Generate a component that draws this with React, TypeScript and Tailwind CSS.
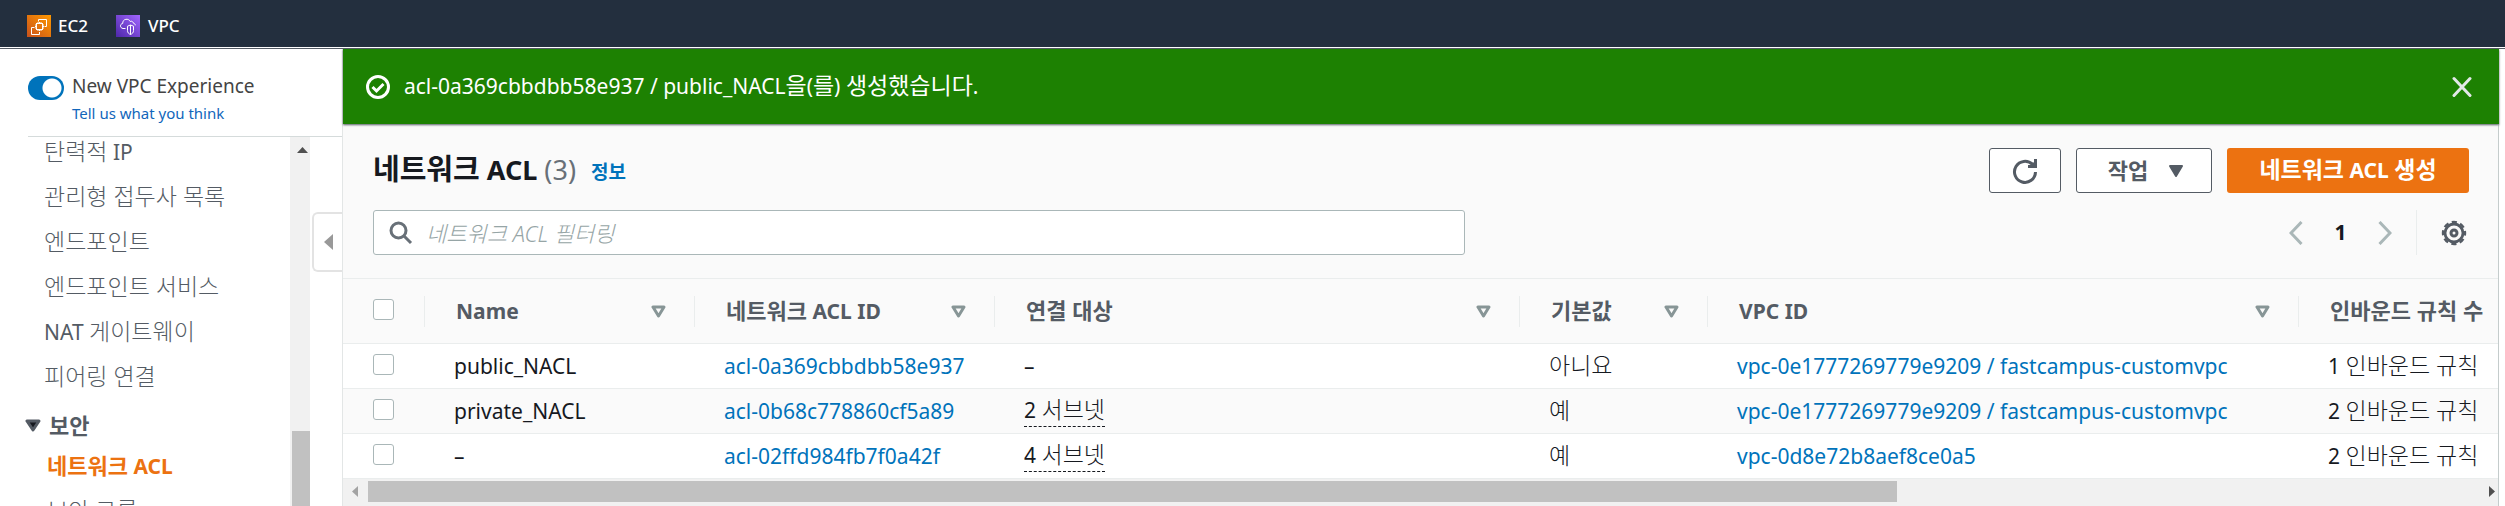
import { useState } from "react";

type Row = { name: string; acl: string; count: string; linked: boolean; isDefault: string; vpc: string; inbound: string };

const rows: Row[] = [
  { name: "public_NACL", acl: "acl-0a369cbbdbb58e937", count: "–", linked: false, isDefault: "아니요", vpc: "vpc-0e1777269779e9209 / fastcampus-customvpc", inbound: "1 인바운드 규칙" },
  { name: "private_NACL", acl: "acl-0b68c778860cf5a89", count: "2 서브넷", linked: true, isDefault: "예", vpc: "vpc-0e1777269779e9209 / fastcampus-customvpc", inbound: "2 인바운드 규칙" },
  { name: "–", acl: "acl-02ffd984fb7f0a42f", count: "4 서브넷", linked: true, isDefault: "예", vpc: "vpc-0d8e72b8aef8ce0a5", inbound: "2 인바운드 규칙" },
];

const columns = ["Name", "네트워크 ACL ID", "연결 대상", "기본값", "VPC ID", "인바운드 규칙 수"];

const navItems = ["탄력적 IP", "관리형 접두사 목록", "엔드포인트", "엔드포인트 서비스", "NAT 게이트웨이", "피어링 연결"];

// Hangul is set a little larger than the Latin text beside it.
function Mixed({ text, hangul = "text-[23px] font-light" }: { text: string; hangul?: string }) {
  return (
    <span>
      {text.split(/([가-힣]+(?: [가-힣]+)*)/).map((part, i) =>
        i % 2 ? <span key={i} className={`leading-none ${hangul}`}>{part}</span> : part,
      )}
    </span>
  );
}

function Ec2Icon() {
  return (
    <svg width="24" height="22" viewBox="0 0 24 22" fill="none" stroke="#fff" strokeWidth="1" aria-hidden="true">
      <defs>
        <linearGradient id="ec2" x1="0" y1="1" x2="1" y2="0">
          <stop offset="0" stopColor="#c8511b" />
          <stop offset="1" stopColor="#ff9900" />
        </linearGradient>
      </defs>
      <rect width="24" height="22" fill="url(#ec2)" stroke="none" />
      <rect x="9.5" y="8.5" width="6" height="6" />
      <path d="M11 8.5V7M12.5 8.5V7M14 8.5V7M11 14.5V16M12.5 14.5V16M14 14.5V16M9.500 10H8M9.500 11.500H8M9.500 13H8M15.500 10H17M15.500 11.500H17M15.500 13H17" />
      <path d="M11.500 6.500v-2h8v7h-2M7.500 12.500h-3v7h8v-2.500" />
    </svg>
  );
}

function VpcIcon() {
  return (
    <svg width="24" height="22" viewBox="0 0 24 22" fill="none" stroke="#fff" strokeWidth="1" aria-hidden="true">
      <defs>
        <linearGradient id="vpc" x1="0" y1="1" x2="1" y2="0">
          <stop offset="0" stopColor="#4d27a8" />
          <stop offset="1" stopColor="#a166ff" />
        </linearGradient>
      </defs>
      <rect width="24" height="22" fill="url(#vpc)" stroke="none" />
      <path d="M9.500 13.500H7c-3.300-.5-3.300-4.600-.3-5C6.500 3.500 12.800 3 14.300 6.500c1.500-.8 2.800.2 3 1.600 1.200.2 1.900 1 2 2.200" />
      <path d="M14.500 10 11.500 11.200v4.300c0 2 1 3.200 3 4 2-.8 3-2 3-4v-4.300zM14.500 10v9.500" />
    </svg>
  );
}

function FilterTriangle() {
  return (
    <svg width="15" height="13" viewBox="0 0 15 13" fill="none" stroke="#879596" strokeWidth="3" strokeLinejoin="round" aria-hidden="true">
      <path d="M2 2h11L7.500 11z" />
    </svg>
  );
}

function Check({ label }: { label: string }) {
  return (
    <input
      type="checkbox"
      aria-label={label}
      className="mb-[3px] block size-[21px] appearance-none rounded-[3px] border border-[#aab7b8] bg-white checked:bg-[#0073bb]"
    />
  );
}

function Sidebar() {
  const [on, setOn] = useState(true);
  return (
    <aside className="relative flex w-[343px] shrink-0 flex-col overflow-hidden border-r border-[#e3e6e6] bg-white">
      <div className="ml-7 flex h-[88px] shrink-0 gap-2 border-b border-[#d5dbdb] pt-6">
        <input
          id="experience"
          type="checkbox"
          checked={on}
          onChange={() => setOn(!on)}
          className="mt-[3px] h-6 w-9 shrink-0 appearance-none rounded-full bg-[#879596] bg-[radial-gradient(circle_at_12px_12px,#fff_9px,transparent_10px)] checked:bg-[#0073bb] checked:bg-[radial-gradient(circle_at_24px_12px,#fff_9px,transparent_10px)]"
        />
        <div className="flex flex-col">
          <label htmlFor="experience" className="text-[19px] leading-[26px] text-[#444]">New VPC Experience</label>
          <a href="#feedback" className="text-[15px] leading-[28px] text-[#1166bb]">Tell us what you think</a>
        </div>
      </div>
      <div className="flex min-h-0 flex-1">
        <nav className="h-0 min-h-full flex-1 overflow-hidden text-[#545b64]">
          <ul className="-mt-[7px] pl-11">
            {navItems.map((item) => (
              <li key={item} className="h-[45px] leading-[45px]">
                <a href="#nav"><Mixed text={item} /></a>
              </li>
            ))}
          </ul>
          <h2 className="mt-[3px] flex h-[41px] items-center gap-2 pt-1 pl-[25px] text-[22px] font-bold">
            <svg width="16" height="13" viewBox="0 0 16 13" aria-hidden="true">
              <path d="M2 2h12L8 11z" fill="#16191f" stroke="#545b64" strokeWidth="3" strokeLinejoin="round" />
            </svg>
            보안
          </h2>
          <ul className="pl-[47px] leading-[45px]">
            <li className="h-[45px]"><a href="#acl" className="font-bold text-[#ec7211]"><Mixed text="네트워크 ACL" hangul="text-[22px]" /></a></li>
            <li className="h-[45px]"><a href="#sg"><Mixed text="보안 그룹" /></a></li>
          </ul>
        </nav>
        <div className="flex w-5 flex-col bg-[#f1f1f1]" aria-hidden="true">
          <svg className="mt-2.5 ml-[7px]" width="11" height="6" viewBox="0 0 11 6"><path d="M0 6 5.500 0 11 6z" fill="#505050" /></svg>
          <div className="mt-[278px] ml-0.5 flex-1 bg-[#c1c1c1]" />
        </div>
        <div className="w-8 pt-[75px]">
          <button type="button" aria-label="Collapse navigation" className="ml-0.5 flex h-[60px] w-[31px] items-center rounded-l-md border-2 border-r-0 border-[#e3e3e3] bg-white pl-2.5">
            <svg width="9" height="16" viewBox="0 0 9 16"><path d="M9 0v16L0 8z" fill="#999" /></svg>
          </button>
        </div>
      </div>
    </aside>
  );
}

export default function App() {
  return (
    <div className="flex h-screen flex-col overflow-hidden bg-white font-['Noto_Sans','Noto_Sans_CJK_KR',sans-serif] text-[21px] text-[#16191f]">
      <header className="flex h-[47px] shrink-0 items-center bg-[#232f3e] pt-1 pl-[27px] text-[17px] font-medium text-white">
        <a href="#ec2" className="flex items-center gap-[7px]"><Ec2Icon />EC2</a>
        <a href="#vpc" className="ml-7 flex items-center gap-2"><VpcIcon />VPC</a>
      </header>
      <div className="mt-px h-px shrink-0 bg-[#545b64]" />
      <div className="flex min-h-0 flex-1">
        <Sidebar />
        <main className="mr-1.5 flex min-w-0 flex-1 flex-col border-r border-[#c4cccc] bg-[#fafafa]">
          <div role="status" className="z-10 -mr-px flex h-[75px] shrink-0 items-center bg-[#1d8102] pr-[27px] pl-[22px] text-white shadow-[0_1px_2px_#545b64]">
            <svg width="26" height="26" viewBox="0 0 26 26" fill="none" stroke="#fff" strokeWidth="3" aria-hidden="true">
              <circle cx="13" cy="13" r="10.500" />
              <path d="m7.500 13 4 4 7-7" />
            </svg>
            <span className="ml-[13px]"><Mixed text="acl-0a369cbbdbb58e937 / public_NACL을(를) 생성했습니다." hangul="text-[23px]" /></span>
            <button type="button" aria-label="닫기" className="ml-auto">
              <svg width="20" height="22" viewBox="0 0 20 22" fill="none" stroke="#e3e8e8" strokeWidth="3" strokeLinecap="round"><path d="m2 2.500 16 17M18 2.500l-16 17" /></svg>
            </button>
          </div>
          <div className="flex items-center gap-[15px] pt-6 pr-[29px] pl-[30px]">
            <h1 className="h-[45px] text-[27px] leading-[44px] font-bold"><Mixed text="네트워크 ACL" hangul="text-[29px]" /> <span className="font-normal text-[#687078]">(3)</span></h1>
            <a href="#info" className="pt-1 text-[19px] font-bold text-[#0073bb]">정보</a>
            <button type="button" aria-label="새로 고침" className="ml-auto flex h-[45px] w-[72px] items-center justify-center rounded-[3px] border border-[#545b64] bg-white">
              <svg width="26" height="26" viewBox="0 0 26 26" fill="none" stroke="#545b64" strokeWidth="3"><path d="M23.500 14A10.500 10.500 0 1 1 20.500 6.500" /><path d="M23.500 1v7.500H16M20 5l3 3" /></svg>
            </button>
            <button type="button" className="flex h-[45px] w-[136px] items-center justify-center gap-5 rounded-[3px] border border-[#545b64] bg-white pl-1 text-[22px] font-bold text-[#545b64]">
              작업
              <svg width="16" height="14" viewBox="0 0 16 14"><path d="M2 2h12L8 12z" fill="#545b64" stroke="#545b64" strokeWidth="2" strokeLinejoin="round" /></svg>
            </button>
            <button type="button" className="h-[45px] w-[242px] rounded-[3px] bg-[#ec7211] font-bold whitespace-nowrap text-white"><Mixed text="네트워크 ACL 생성" hangul="text-[23px]" /></button>
          </div>
          <div className="flex items-center pt-[17px] pr-[29px] pb-[23px] pl-[30px]">
            <div className="flex h-[45px] w-[1092px] items-center rounded-[3px] border border-[#aab7b8] bg-white pl-[15px]">
              <svg width="24" height="24" viewBox="0 0 24 24" fill="none" stroke="#687078" strokeWidth="3" aria-hidden="true"><circle cx="9.500" cy="9.500" r="7.500" /><path d="m15 15 7 7" /></svg>
              <input type="search" aria-label="네트워크 ACL 필터링" placeholder="네트워크 ACL 필터링" className="ml-[13px] h-full flex-1 bg-transparent text-[22px] outline-none placeholder:font-light placeholder:text-[#96a5a6] placeholder:italic" />
            </div>
            <div className="ml-auto flex h-[45px] items-center">
              <button type="button" aria-label="이전 페이지"><svg width="14" height="24" viewBox="0 0 14 24" fill="none" stroke="#aab7b8" strokeWidth="3"><path d="M12.500 1 2 12l10.500 11" /></svg></button>
              <span className="w-[75px] text-center font-bold">1</span>
              <button type="button" aria-label="다음 페이지"><svg width="14" height="24" viewBox="0 0 14 24" fill="none" stroke="#aab7b8" strokeWidth="3"><path d="M1.500 1 12 12 1.500 23" /></svg></button>
              <span className="mx-6 h-full w-px bg-[#eaeded]" />
              <button type="button" aria-label="설정" className="mr-0.5">
                <svg width="26" height="26" viewBox="0 0 26 26" fill="none" stroke="#545b64">
                  <circle cx="13" cy="13" r="3" strokeWidth="3" />
                  <circle cx="13" cy="13" r="9" strokeWidth="2.800" />
                  <circle cx="13" cy="13" r="11" strokeWidth="2.400" strokeDasharray="5.200 3.440" strokeDashoffset="2.600" />
                </svg>
              </button>
            </div>
          </div>
          <table className="w-full table-fixed border-collapse text-left leading-[30px] whitespace-nowrap">
            <colgroup>
              <col className="w-[82px]" /><col className="w-[270px]" /><col className="w-[300px]" /><col className="w-[525px]" /><col className="w-[188px]" /><col className="w-[591px]" /><col />
            </colgroup>
            <thead>
              <tr className="h-[65px] border-y border-[#eaeded] text-[#545b64]">
                <th className="p-0"><div className="flex h-[31px] items-center border-r border-[#eaeded] pl-[30px]"><Check label="모두 선택" /></div></th>
                {columns.map((column, i) => (
                  <th key={column} className="p-0">
                    <div className={`flex h-[31px] items-center justify-between pl-[31px] ${i < 5 ? "border-r border-[#eaeded] pr-7" : ""}`}>
                      <Mixed text={column} hangul="text-[22px]" />
                      {i < 5 && <FilterTriangle />}
                    </div>
                  </th>
                ))}
              </tr>
            </thead>
            <tbody>
              {rows.map((row) => (
                <tr key={row.acl} className="h-[45px] border-b border-[#eaeded] bg-white even:bg-[#fafafa]">
                  <td className="p-0 pl-[30px]"><Check label={row.acl} /></td>
                  <td className="p-0 pl-[29px]">{row.name}</td>
                  <td className="p-0 pl-[29px]"><a href="#acl" className="text-[#0073bb]">{row.acl}</a></td>
                  <td className="p-0 pl-[29px]">
                    {row.linked ? <button type="button" className="mb-0.5 block h-[34px] border-b border-dashed border-[#16191f]"><Mixed text={row.count} /></button> : row.count}
                  </td>
                  <td className="p-0 pl-[29px]"><Mixed text={row.isDefault} /></td>
                  <td className="p-0 pl-[29px]"><a href="#vpc" className="text-[#0073bb]">{row.vpc}</a></td>
                  <td className="p-0 pl-[29px]"><Mixed text={row.inbound} /></td>
                </tr>
              ))}
            </tbody>
          </table>
          <div className="flex flex-1 items-start bg-[#f1f1f1] pt-0.5" aria-hidden="true">
            <svg className="mt-[5px] ml-[9px] shrink-0" width="6" height="11" viewBox="0 0 6 11"><path d="M6 0v11L0 5.500z" fill="#a3a3a3" /></svg>
            <div className="mr-[9px] ml-2.5 flex-1"><div className="h-[21px] w-[72.400%] bg-[#c1c1c1]" /></div>
            <svg className="mt-[5px] mr-[3px] shrink-0" width="6" height="11" viewBox="0 0 6 11"><path d="M0 0v11l6-5.500z" fill="#505050" /></svg>
          </div>
        </main>
      </div>
    </div>
  );
}
